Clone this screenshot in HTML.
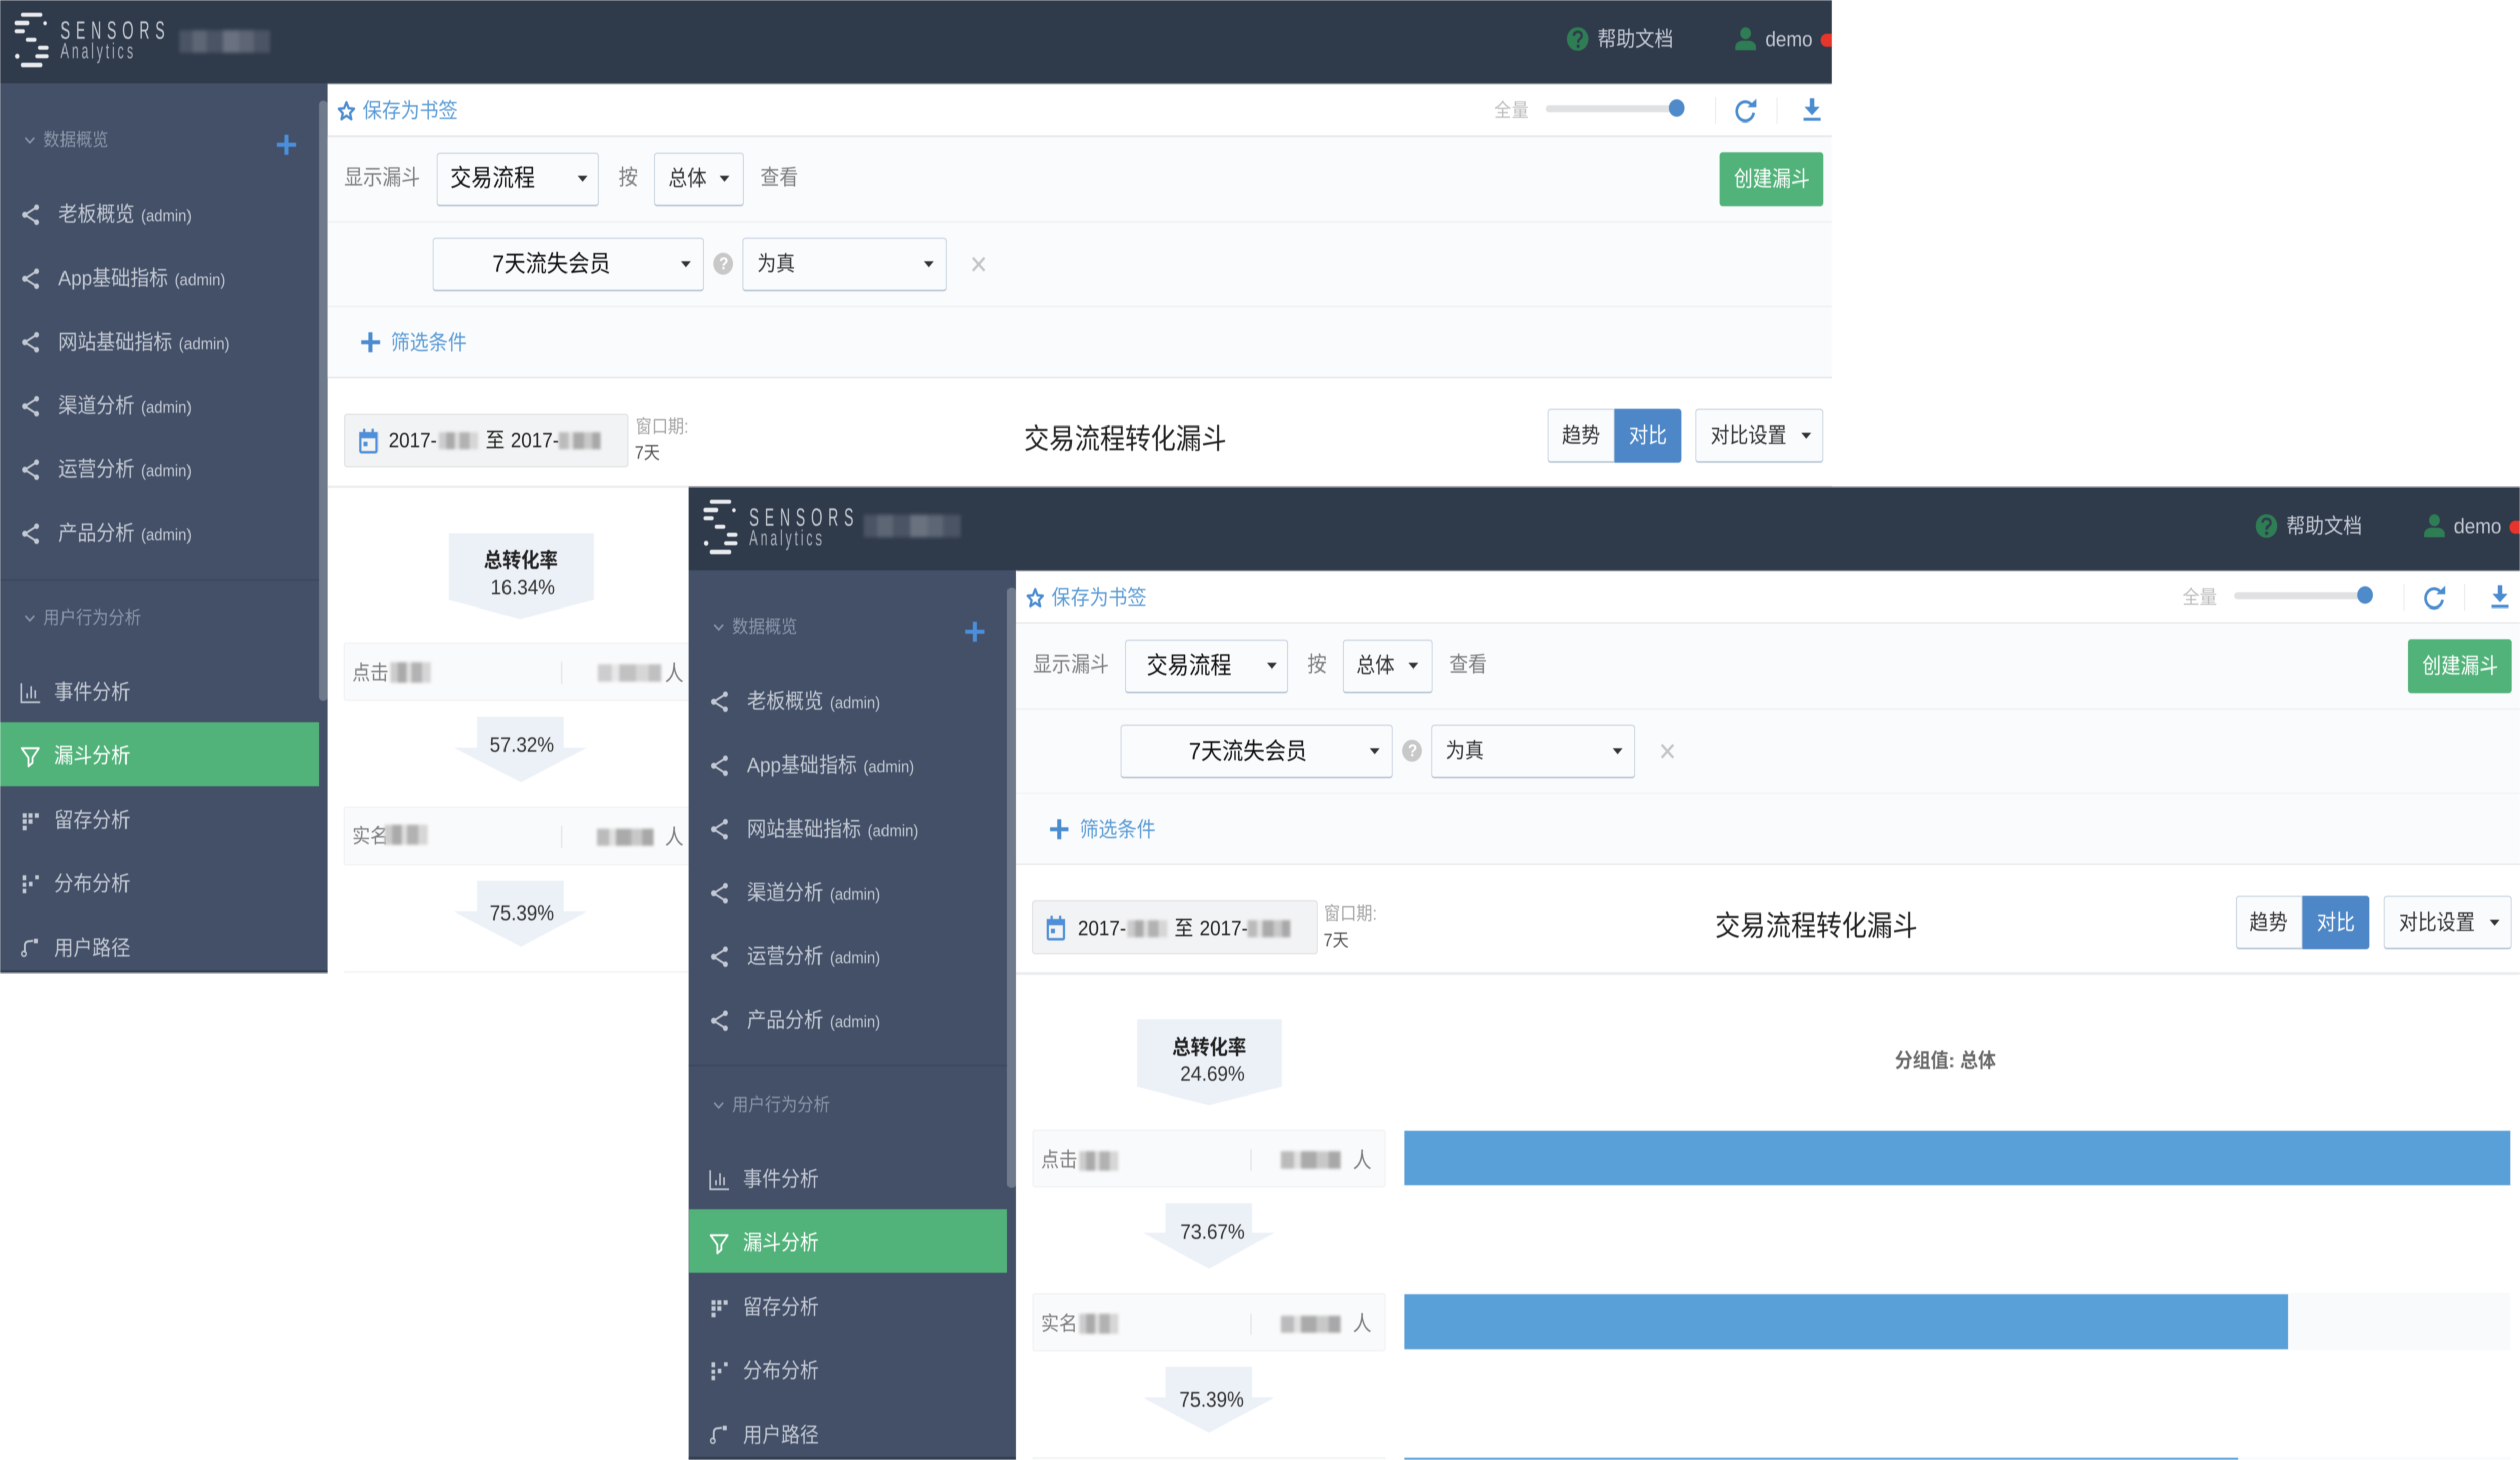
<!DOCTYPE html>
<html lang="zh-CN"><head><meta charset="utf-8"><title>Sensors Analytics</title>
<style>
html,body{margin:0;padding:0;background:#fff;width:100%;height:100%;overflow:hidden}
#p{position:absolute;left:0;top:0;width:5572px;height:2896px;background:#fff;overflow:hidden;font-family:"Liberation Sans","Noto Sans CJK SC",sans-serif;transform-origin:0 0}
@media (max-width:5100px){#p{transform:scaleX(calc(5000 / 5572))}}
.w{position:absolute;overflow:hidden;background:#fff;filter:blur(1px)}
.a{position:absolute;box-sizing:border-box}
.s{position:absolute;white-space:nowrap;line-height:0;font-size:42px}
.s small{font-size:33px;margin-left:3px}
svg{position:absolute;overflow:visible}
.m{color:#c3c9d3}.h{color:#8b96a8;font-size:36px}
.g{color:#7d7d7d}.bl{color:#5b9bd5}
.sel{position:absolute;box-sizing:border-box;background:#f9fbfd;border:2px solid #c3cfdc;border-bottom:3px solid #b3c1d1;border-radius:7px}
.c{position:absolute;width:0;height:0;border-left:11px solid transparent;border-right:11px solid transparent;border-top:12px solid #333}
.row{position:absolute;left:760px;width:781px;background:#f9fafb;border:2px solid #eeeff1;border-radius:5px;box-sizing:border-box}
.bx{position:absolute;filter:blur(3px);background:linear-gradient(90deg,#ccc 0 18%,#aaa 18% 40%,#ddd 40% 52%,#b2b2b2 52% 78%,#d6d6d6 78% 100%)}
.by{position:absolute;filter:blur(3px);background:linear-gradient(90deg,#bbb 0 22%,#e0e0e0 22% 34%,#aaa 34% 60%,#c8c8c8 60% 80%,#a8a8a8 80% 100%)}
.hb{position:absolute;filter:blur(4px);background:linear-gradient(90deg,#4a5464 0 14%,#5d6674 14% 30%,#4a5464 30% 48%,#6a7280 48% 66%,#5d6674 66% 82%,#4a5464 82% 100%)}
.f{fill:#ecf1f7}
.tx{color:#333}
</style></head><body>
<svg width="0" height="0" style="position:absolute"><defs>
<symbol id="share" viewBox="0 0 40 42" overflow="visible"><path d="M33 6 7 21 33 36" fill="none" stroke="#c3c9d3" stroke-width="4"/><circle cx="33" cy="6" r="5.5" fill="#c3c9d3"/><circle cx="7" cy="21" r="6" fill="#c3c9d3"/><circle cx="33" cy="36" r="5.5" fill="#c3c9d3"/></symbol>
<symbol id="logo" viewBox="0 0 120 140" overflow="visible"><g fill="#e9ebee"><rect x="46" y="25" width="48" height="8" rx="4"/><rect x="32" y="41" width="33" height="9" rx="4"/><circle cx="100" cy="46" r="4"/><rect x="32" y="58" width="23" height="8" rx="4"/><rect x="57" y="75" width="24" height="8" rx="4"/><rect x="84" y="91" width="24" height="8" rx="4"/><rect x="78" y="108" width="30" height="8" rx="4"/><circle cx="38" cy="112" r="5"/><rect x="46" y="124" width="48" height="9" rx="4"/></g></symbol>
<symbol id="star" viewBox="0 0 40 40" overflow="visible"><path d="M20 3 25 15 37 16 28 25 31 37 20 30 9 37 12 25 3 16 15 15Z" fill="none" stroke="#4a8ccf" stroke-width="5" stroke-linejoin="round"/></symbol>
<symbol id="cal" viewBox="0 0 42 48" overflow="visible"><path d="M3 9H39V44Q39 47 36 47H6Q3 47 3 44Z" fill="none" stroke="#4f8fd8" stroke-width="5"/><rect x="1" y="7" width="40" height="12" fill="#4f8fd8"/><rect x="9" y="0" width="5" height="9" fill="#4f8fd8"/><rect x="28" y="0" width="5" height="9" fill="#4f8fd8"/><rect x="10" y="26" width="9" height="9" fill="#4f8fd8"/></symbol>
<symbol id="refresh" viewBox="0 0 50 44" overflow="visible"><path d="M40 11A19 19 0 1 0 44 26" fill="none" stroke="#4a8ccf" stroke-width="6"/><path d="M30 15H50V-2Z" fill="#4a8ccf"/></symbol>
<symbol id="dl" viewBox="0 0 38 46" overflow="visible"><path d="M14 0H24V17H36L19 34 2 17H14ZM0 39H38V45H0Z" fill="#4a8ccf"/></symbol>
<symbol id="q" viewBox="0 0 47 47" overflow="visible"><circle cx="23.500" cy="23.500" r="23.500" fill="#2e7d54"/><path d="M15 17Q16 9 24 9 32 10 32 17 32 21 27 24 24 26 24 31" fill="none" stroke="#2f3a4b" stroke-width="5"/><circle cx="24" cy="38" r="3.500" fill="#2f3a4b"/></symbol>
<symbol id="user" viewBox="0 0 46 46" overflow="visible"><circle cx="23" cy="12" r="12" fill="#2e7d54"/><path d="M0 46V38Q2 29 14 27H32Q44 29 46 38V46Z" fill="#2e7d54"/></symbol>
<symbol id="bars" viewBox="0 0 44 40" overflow="visible"><path d="M2 0V38H44M15 20V30M24 6V30M33 14V30" fill="none" stroke="#c3c9d3" stroke-width="3.500"/></symbol>
<symbol id="fun" viewBox="0 0 44 42" overflow="visible"><path d="M3 3H41L27 22V32L18 39V22Z" fill="none" stroke="#fff" stroke-width="4" stroke-linejoin="round"/></symbol>
<symbol id="ret" viewBox="0 0 36 34" overflow="visible"><g fill="#c3c9d3"><rect width="9" height="9"/><rect x="13" width="9" height="9"/><rect x="27" width="9" height="9"/><rect y="12" width="9" height="9"/><rect x="13" y="12" width="9" height="9"/><rect y="25" width="9" height="9"/></g></symbol>
<symbol id="dis" viewBox="0 0 36 36" overflow="visible"><g fill="#c3c9d3"><rect width="8" height="10"/><rect x="28" width="8" height="8"/><rect y="15" width="8" height="8"/><rect x="14" y="13" width="8" height="9"/><rect y="27" width="8" height="9"/></g></symbol>
<symbol id="path" viewBox="0 0 40 36" overflow="visible"><path d="M8 28V14Q8 5 18 5 20 5 26 4" fill="none" stroke="#c3c9d3" stroke-width="4"/><circle cx="6" cy="30" r="5" fill="none" stroke="#c3c9d3" stroke-width="3"/><rect x="28" y="0" width="9" height="9" fill="#c3c9d3"/></symbol>
</defs></svg>
<div id="p">

<!-- BACK WINDOW -->
<div class="w" style="left:0;top:0;width:4050px;height:1930px">
<div class="a" style="left:0;top:0;width:4050px;height:165px;background:#2f3a4b"></div>
<div class="a" style="left:724px;top:165px;width:3326px;height:2px;background:#8c939e"></div>
<svg style="left:0;top:0" width="120" height="140"><use href="#logo" width="120" height="140"/></svg>
<svg style="left:130px;top:30px" width="250" height="110"><g transform="translate(4 0) scale(.62 1)"><text x="0" y="47" font-size="50" fill="#c6cbd2" textLength="371" lengthAdjust="spacing" font-family="Liberation Sans">SENSORS</text><text x="0" y="86" font-size="44" fill="#a9b0ba" textLength="258" lengthAdjust="spacing" font-family="Liberation Sans">Analytics</text></g></svg>
<div class="hb" style="left:397px;top:60px;width:200px;height:45px"></div>
<svg style="left:3465px;top:54px" width="47" height="47"><use href="#q" width="47" height="47"/></svg>
<span class="s m" style="left:3532px;top:78px">帮助文档</span>
<svg style="left:3837px;top:54px" width="46" height="46"><use href="#user" width="46" height="46"/></svg>
<span class="s m" style="left:3903px;top:78px">demo</span>
<div class="a" style="left:4026px;top:67px;width:24px;height:26px;border-radius:13px 0 0 13px;background:#e8352b"></div>

<div class="a" style="left:0;top:165px;width:724px;height:1765px;background:#435068"></div>
<div class="a" style="left:705px;top:200px;width:19px;height:1190px;background:#6f7a8d;border-radius:8px 8px 8px 8px"></div>
<svg style="left:53px;top:270px" width="26" height="16"><path d="M3 3 13 13 23 3" fill="none" stroke="#8b96a8" stroke-width="3.500"/></svg>
<span class="s h" style="left:96px;top:277px">数据概览</span>
<div class="a" style="left:612px;top:283px;width:43px;height:8px;background:#4a8fdc"></div><div class="a" style="left:629px;top:267px;width:9px;height:40px;background:#4a8fdc"></div>
<svg style="left:48px;top:405px" width="40" height="42"><use href="#share" width="40" height="42"/></svg><span class="s m" style="left:129px;top:425px">老板概览 <small>(admin)</small></span>
<svg style="left:48px;top:532px" width="40" height="42"><use href="#share" width="40" height="42"/></svg><span class="s m" style="left:129px;top:552px">App基础指标 <small>(admin)</small></span>
<svg style="left:48px;top:658px" width="40" height="42"><use href="#share" width="40" height="42"/></svg><span class="s m" style="left:129px;top:679px">网站基础指标 <small>(admin)</small></span>
<svg style="left:48px;top:785px" width="40" height="42"><use href="#share" width="40" height="42"/></svg><span class="s m" style="left:129px;top:805px">渠道分析 <small>(admin)</small></span>
<svg style="left:48px;top:911px" width="40" height="42"><use href="#share" width="40" height="42"/></svg><span class="s m" style="left:129px;top:931px">运营分析 <small>(admin)</small></span>
<svg style="left:48px;top:1038px" width="40" height="42"><use href="#share" width="40" height="42"/></svg><span class="s m" style="left:129px;top:1058px">产品分析 <small>(admin)</small></span>
<div class="a" style="left:0;top:1149px;width:705px;height:3px;background:#3b475d"></div>
<svg style="left:53px;top:1218px" width="26" height="16"><path d="M3 3 13 13 23 3" fill="none" stroke="#8b96a8" stroke-width="3.500"/></svg>
<span class="s h" style="left:96px;top:1225px">用户行为分析</span>
<svg style="left:45px;top:1355px" width="44" height="40"><use href="#bars" width="44" height="40"/></svg><span class="s m" style="left:120px;top:1373px">事件分析</span>
<div class="a" style="left:0;top:1433px;width:705px;height:127px;background:#52b37a"></div>
<svg style="left:45px;top:1481px" width="44" height="42"><use href="#fun" width="44" height="42"/></svg><span class="s" style="left:120px;top:1499px;color:#fff">漏斗分析</span>
<svg style="left:50px;top:1613px" width="36" height="34"><use href="#ret" width="36" height="34"/></svg><span class="s m" style="left:120px;top:1627px">留存分析</span>
<svg style="left:50px;top:1736px" width="36" height="36"><use href="#dis" width="36" height="36"/></svg><span class="s m" style="left:120px;top:1753px">分布分析</span>
<svg style="left:47px;top:1862px" width="40" height="36"><use href="#path" width="40" height="36"/></svg><span class="s m" style="left:120px;top:1881px">用户路径</span>
<div class="a" style="left:0;top:1925px;width:724px;height:5px;background:#333e51"></div>

<!-- main rows -->
<div class="a" style="left:724px;top:268px;width:3326px;height:4px;background:#e8e9ea"></div>
<div class="a" style="left:724px;top:272px;width:3326px;height:168px;background:#f9fbfd"></div>
<div class="a" style="left:724px;top:439px;width:3326px;height:3px;background:#eef0f2"></div>
<div class="a" style="left:724px;top:442px;width:3326px;height:166px;background:#f9fbfd"></div>
<div class="a" style="left:724px;top:606px;width:3326px;height:3px;background:#eef0f2"></div>
<div class="a" style="left:724px;top:609px;width:3326px;height:138px;background:#f9fbfd"></div>
<div class="a" style="left:724px;top:747px;width:3326px;height:3px;background:#e4e6e8"></div>
<div class="a" style="left:724px;top:964px;width:3326px;height:3px;background:#e8e9ea"></div>

<svg style="left:746px;top:200px" width="40" height="40"><use href="#star" width="40" height="40"/></svg>
<span class="s bl" style="left:802px;top:220px">保存为书签</span>
<span class="s" style="left:3304px;top:220px;font-size:38px;color:#bcbcbc">全量</span>
<div class="a" style="left:3418px;top:209px;width:290px;height:14px;background:#e0e1e2;border-radius:7px"></div>
<div class="a" style="left:3690px;top:197px;width:35px;height:35px;border-radius:50%;background:#4f8acb"></div>
<div class="a" style="left:3792px;top:193px;width:2px;height:52px;background:#e8e8e8"></div>
<svg style="left:3834px;top:198px" width="50" height="44"><use href="#refresh" width="50" height="44"/></svg>
<div class="a" style="left:3928px;top:193px;width:2px;height:52px;background:#e8e8e8"></div>
<svg style="left:3988px;top:195px" width="38" height="46"><use href="#dl" width="38" height="46"/></svg>

<span class="s g" style="left:761px;top:352px">显示漏斗</span>
<div class="sel" style="left:966px;top:303px;width:358px;height:106px"></div>
<span class="s" style="left:995px;top:353px;font-size:47px;color:#111">交易流程</span><div class="c" style="left:1277px;top:349px"></div>
<span class="s g" style="left:1368px;top:352px">按</span>
<div class="sel" style="left:1446px;top:303px;width:199px;height:106px"></div>
<span class="s tx" style="left:1478px;top:354px">总体</span><div class="c" style="left:1591px;top:349px"></div>
<span class="s g" style="left:1681px;top:352px">查看</span>
<div class="a" style="left:3802px;top:302px;width:230px;height:107px;background:#52b37a;border-radius:7px"></div>
<span class="s" style="left:3834px;top:355px;color:#fff">创建漏斗</span>

<div class="sel" style="left:957px;top:472px;width:599px;height:106px"></div>
<span class="s" style="left:1089px;top:523px;font-size:47px;color:#111">7天流失会员</span><div class="c" style="left:1506px;top:518px"></div>
<div class="a" style="left:1577px;top:501px;width:44px;height:44px;border-radius:50%;background:#c8c8c8"></div><span class="s" style="left:1590px;top:523px;font-size:34px;color:#fff;font-weight:bold">?</span>
<div class="sel" style="left:1642px;top:472px;width:451px;height:106px"></div>
<span class="s tx" style="left:1674px;top:523px">为真</span><div class="c" style="left:2043px;top:518px"></div>
<svg style="left:2148px;top:508px" width="32" height="32"><path d="M3 3 29 29M29 3 3 29" stroke="#c4c4c4" stroke-width="5"/></svg>

<div class="a" style="left:799px;top:675px;width:41px;height:8px;background:#4a8ccf"></div><div class="a" style="left:815px;top:659px;width:9px;height:40px;background:#4a8ccf"></div>
<span class="s bl" style="left:864px;top:680px">筛选条件</span>

<div class="a" style="left:761px;top:821px;width:629px;height:106px;background:#f2f3f4;border:2px solid #dcdddf;border-radius:7px"></div>
<svg style="left:794px;top:850px" width="42" height="48"><use href="#cal" width="42" height="48"/></svg>
<span class="s" style="left:859px;top:873px;color:#222">2017-</span><div class="bx" style="left:971px;top:857px;width:86px;height:34px"></div>
<span class="s" style="left:1074px;top:873px;color:#222">至</span><span class="s" style="left:1129px;top:873px;color:#222">2017-</span><div class="by" style="left:1236px;top:857px;width:92px;height:34px"></div>
<span class="s" style="left:1405px;top:846px;font-size:36px;color:#a3a3a3">窗口期:</span>
<span class="s" style="left:1403px;top:898px;font-size:36px;color:#555">7天</span>
<span class="s" style="left:2264px;top:871px;font-size:56px;color:#222">交易流程转化漏斗</span>

<div class="a" style="left:3422px;top:811px;width:148px;height:107px;background:#f9fbfd;border:2px solid #c3cfdc;border-bottom:3px solid #b3c1d1;border-radius:7px 0 0 7px"></div>
<div class="a" style="left:3570px;top:811px;width:148px;height:107px;background:#4d87c7;border-radius:0 7px 7px 0"></div>
<span class="s tx" style="left:3454px;top:864px">趋势</span><span class="s" style="left:3602px;top:864px;color:#fff">对比</span>
<div class="sel" style="left:3749px;top:811px;width:283px;height:107px"></div>
<span class="s tx" style="left:3782px;top:864px">对比设置</span><div class="c" style="left:3983px;top:858px"></div>

<svg style="left:0;top:0" width="1600" height="1930"><path class="f" d="M992 1058H1313V1190L1150 1228 992 1190Z"/><path class="f" d="M1055 1422H1247V1483H1298L1152 1552 1003 1483H1055Z"/><path class="f" d="M1055 1747H1247V1808H1298L1152 1878 1003 1808H1055Z"/></svg>
<span class="s" style="left:1070px;top:1111px;font-size:41px;color:#222;font-weight:bold">总转化率</span>
<span class="s tx" style="left:1085px;top:1165px">16.34%</span>
<span class="s tx" style="left:1083px;top:1477px">57.32%</span>
<span class="s tx" style="left:1083px;top:1811px">75.39%</span>
<div class="row" style="top:1275px;height:115px"></div>
<div class="row" style="top:1600px;height:116px"></div>
<div class="row" style="top:1927px;height:3px;border-bottom:0"></div>
<span class="s g" style="left:779px;top:1335px;font-size:40px">点击</span><div class="bx" style="left:863px;top:1314px;width:90px;height:40px"></div>
<div class="a" style="left:1241px;top:1313px;width:3px;height:44px;background:#e4e5e7"></div><div class="by" style="left:1322px;top:1318px;width:140px;height:34px;opacity:.7"></div><span class="s g" style="left:1470px;top:1336px;font-size:42px">人</span>
<span class="s g" style="left:779px;top:1659px;font-size:40px">实名</span><div class="bx" style="left:850px;top:1636px;width:96px;height:40px"></div>
<div class="a" style="left:1241px;top:1638px;width:3px;height:44px;background:#e4e5e7"></div><div class="by" style="left:1320px;top:1644px;width:125px;height:34px"></div><span class="s g" style="left:1470px;top:1661px;font-size:42px">人</span>
</div>

<!-- FRONT WINDOW -->
<div class="w" style="left:1523px;top:966px;width:4049px;height:1930px">
<div class="a" style="left:0;top:0;width:4049px;height:165px;background:#2f3a4b"></div>
<div class="a" style="left:724px;top:165px;width:3325px;height:2px;background:#8c939e"></div>
<svg style="left:0;top:0" width="120" height="140"><use href="#logo" width="120" height="140"/></svg>
<svg style="left:130px;top:30px" width="250" height="110"><g transform="translate(4 0) scale(.62 1)"><text x="0" y="47" font-size="50" fill="#c6cbd2" textLength="371" lengthAdjust="spacing" font-family="Liberation Sans">SENSORS</text><text x="0" y="86" font-size="44" fill="#a9b0ba" textLength="258" lengthAdjust="spacing" font-family="Liberation Sans">Analytics</text></g></svg>
<div class="hb" style="left:387px;top:55px;width:214px;height:45px"></div>
<svg style="left:3465px;top:54px" width="47" height="47"><use href="#q" width="47" height="47"/></svg>
<span class="s m" style="left:3532px;top:78px">帮助文档</span>
<svg style="left:3837px;top:54px" width="46" height="46"><use href="#user" width="46" height="46"/></svg>
<span class="s m" style="left:3903px;top:78px">demo</span>
<div class="a" style="left:4026px;top:67px;width:23px;height:26px;border-radius:13px 0 0 13px;background:#e8352b"></div>

<div class="a" style="left:0;top:165px;width:723px;height:1765px;background:#435068"></div>
<div class="a" style="left:704px;top:200px;width:19px;height:1190px;background:#6f7a8d;border-radius:8px"></div>
<svg style="left:53px;top:270px" width="26" height="16"><path d="M3 3 13 13 23 3" fill="none" stroke="#8b96a8" stroke-width="3.500"/></svg>
<span class="s h" style="left:96px;top:277px">数据概览</span>
<div class="a" style="left:611px;top:283px;width:43px;height:8px;background:#4a8fdc"></div><div class="a" style="left:628px;top:267px;width:9px;height:40px;background:#4a8fdc"></div>
<svg style="left:48px;top:405px" width="40" height="42"><use href="#share" width="40" height="42"/></svg><span class="s m" style="left:129px;top:425px">老板概览 <small>(admin)</small></span>
<svg style="left:48px;top:532px" width="40" height="42"><use href="#share" width="40" height="42"/></svg><span class="s m" style="left:129px;top:552px">App基础指标 <small>(admin)</small></span>
<svg style="left:48px;top:658px" width="40" height="42"><use href="#share" width="40" height="42"/></svg><span class="s m" style="left:129px;top:679px">网站基础指标 <small>(admin)</small></span>
<svg style="left:48px;top:785px" width="40" height="42"><use href="#share" width="40" height="42"/></svg><span class="s m" style="left:129px;top:805px">渠道分析 <small>(admin)</small></span>
<svg style="left:48px;top:911px" width="40" height="42"><use href="#share" width="40" height="42"/></svg><span class="s m" style="left:129px;top:931px">运营分析 <small>(admin)</small></span>
<svg style="left:48px;top:1038px" width="40" height="42"><use href="#share" width="40" height="42"/></svg><span class="s m" style="left:129px;top:1058px">产品分析 <small>(admin)</small></span>
<div class="a" style="left:0;top:1146px;width:704px;height:3px;background:#3b475d"></div>
<svg style="left:53px;top:1218px" width="26" height="16"><path d="M3 3 13 13 23 3" fill="none" stroke="#8b96a8" stroke-width="3.500"/></svg>
<span class="s h" style="left:96px;top:1225px">用户行为分析</span>
<svg style="left:45px;top:1355px" width="44" height="40"><use href="#bars" width="44" height="40"/></svg><span class="s m" style="left:120px;top:1373px">事件分析</span>
<div class="a" style="left:1px;top:1433px;width:703px;height:126px;background:#52b37a"></div>
<svg style="left:45px;top:1481px" width="44" height="42"><use href="#fun" width="44" height="42"/></svg><span class="s" style="left:120px;top:1499px;color:#fff">漏斗分析</span>
<svg style="left:50px;top:1613px" width="36" height="34"><use href="#ret" width="36" height="34"/></svg><span class="s m" style="left:120px;top:1627px">留存分析</span>
<svg style="left:50px;top:1736px" width="36" height="36"><use href="#dis" width="36" height="36"/></svg><span class="s m" style="left:120px;top:1753px">分布分析</span>
<svg style="left:47px;top:1862px" width="40" height="36"><use href="#path" width="40" height="36"/></svg><span class="s m" style="left:120px;top:1881px">用户路径</span>
<div class="a" style="left:0;top:1924px;width:723px;height:6px;background:#333e51"></div>

<div class="a" style="left:723px;top:268px;width:3326px;height:3px;background:#e8e9ea"></div>
<div class="a" style="left:723px;top:271px;width:3326px;height:168px;background:#f9fbfd"></div>
<div class="a" style="left:723px;top:439px;width:3326px;height:3px;background:#eef0f2"></div>
<div class="a" style="left:723px;top:442px;width:3326px;height:164px;background:#f9fbfd"></div>
<div class="a" style="left:723px;top:606px;width:3326px;height:2px;background:#eef0f2"></div>
<div class="a" style="left:723px;top:608px;width:3326px;height:139px;background:#f9fbfd"></div>
<div class="a" style="left:723px;top:747px;width:3326px;height:2px;background:#e0e2e5"></div>
<div class="a" style="left:723px;top:963px;width:3326px;height:4px;background:#e9eaeb"></div>

<svg style="left:746px;top:200px" width="40" height="40"><use href="#star" width="40" height="40"/></svg>
<span class="s bl" style="left:802px;top:220px">保存为书签</span>
<span class="s" style="left:3303px;top:220px;font-size:38px;color:#bcbcbc">全量</span>
<div class="a" style="left:3417px;top:209px;width:290px;height:14px;background:#e0e1e2;border-radius:7px"></div>
<div class="a" style="left:3689px;top:197px;width:35px;height:35px;border-radius:50%;background:#4f8acb"></div>
<div class="a" style="left:3791px;top:193px;width:2px;height:52px;background:#e8e8e8"></div>
<svg style="left:3834px;top:198px" width="50" height="44"><use href="#refresh" width="50" height="44"/></svg>
<div class="a" style="left:3925px;top:193px;width:2px;height:52px;background:#e8e8e8"></div>
<svg style="left:3986px;top:195px" width="38" height="46"><use href="#dl" width="38" height="46"/></svg>

<span class="s g" style="left:761px;top:352px">显示漏斗</span>
<div class="sel" style="left:965px;top:303px;width:360px;height:106px"></div>
<span class="s" style="left:1012px;top:354px;font-size:47px;color:#111">交易流程</span><div class="c" style="left:1278px;top:349px"></div>
<span class="s g" style="left:1368px;top:352px">按</span>
<div class="sel" style="left:1446px;top:303px;width:199px;height:106px"></div>
<span class="s tx" style="left:1476px;top:354px">总体</span><div class="c" style="left:1591px;top:349px"></div>
<span class="s g" style="left:1681px;top:352px">查看</span>
<div class="a" style="left:3801px;top:302px;width:230px;height:107px;background:#52b37a;border-radius:7px"></div>
<span class="s" style="left:3833px;top:355px;color:#fff">创建漏斗</span>

<div class="sel" style="left:955px;top:472px;width:601px;height:106px"></div>
<span class="s" style="left:1106px;top:524px;font-size:47px;color:#111">7天流失会员</span><div class="c" style="left:1506px;top:518px"></div>
<div class="a" style="left:1577px;top:501px;width:44px;height:44px;border-radius:50%;background:#c8c8c8"></div><span class="s" style="left:1590px;top:523px;font-size:34px;color:#fff;font-weight:bold">?</span>
<div class="sel" style="left:1642px;top:472px;width:451px;height:106px"></div>
<span class="s tx" style="left:1674px;top:523px">为真</span><div class="c" style="left:2043px;top:518px"></div>
<svg style="left:2148px;top:508px" width="32" height="32"><path d="M3 3 29 29M29 3 3 29" stroke="#c4c4c4" stroke-width="5"/></svg>

<div class="a" style="left:799px;top:675px;width:41px;height:8px;background:#4a8ccf"></div><div class="a" style="left:815px;top:659px;width:9px;height:40px;background:#4a8ccf"></div>
<span class="s bl" style="left:864px;top:680px">筛选条件</span>

<div class="a" style="left:759px;top:820px;width:632px;height:107px;background:#f2f3f4;border:2px solid #dcdddf;border-radius:7px"></div>
<svg style="left:791px;top:850px" width="42" height="48"><use href="#cal" width="42" height="48"/></svg>
<span class="s" style="left:860px;top:875px;color:#222">2017-</span><div class="bx" style="left:970px;top:859px;width:88px;height:34px"></div>
<span class="s" style="left:1074px;top:875px;color:#222">至</span><span class="s" style="left:1129px;top:875px;color:#222">2017-</span><div class="by" style="left:1236px;top:859px;width:94px;height:34px"></div>
<span class="s" style="left:1404px;top:846px;font-size:36px;color:#a3a3a3">窗口期:</span>
<span class="s" style="left:1403px;top:899px;font-size:36px;color:#555">7天</span>
<span class="s" style="left:2269px;top:871px;font-size:56px;color:#222">交易流程转化漏斗</span>

<div class="a" style="left:3421px;top:811px;width:147px;height:106px;background:#f9fbfd;border:2px solid #c3cfdc;border-bottom:3px solid #b3c1d1;border-radius:7px 0 0 7px"></div>
<div class="a" style="left:3568px;top:811px;width:148px;height:106px;background:#4d87c7;border-radius:0 7px 7px 0"></div>
<span class="s tx" style="left:3451px;top:864px">趋势</span><span class="s" style="left:3600px;top:864px;color:#fff">对比</span>
<div class="sel" style="left:3748px;top:811px;width:283px;height:106px"></div>
<span class="s tx" style="left:3781px;top:864px">对比设置</span><div class="c" style="left:3982px;top:858px"></div>

<svg style="left:0;top:0" width="1600" height="1930"><path class="f" d="M991 1056H1311V1190L1150 1226 991 1190Z"/><path class="f" d="M1054 1421H1246V1479H1295L1150 1551 1004 1479H1054Z"/><path class="f" d="M1054 1745H1246V1806H1295L1150 1876 1004 1806H1054Z"/></svg>
<span class="s" style="left:1069px;top:1111px;font-size:41px;color:#222;font-weight:bold">总转化率</span>
<span class="s tx" style="left:1087px;top:1164px">24.69%</span>
<span class="s tx" style="left:1087px;top:1477px">73.67%</span>
<span class="s tx" style="left:1085px;top:1810px">75.39%</span>
<div class="row" style="top:1275px;height:114px"></div>
<div class="row" style="top:1599px;height:115px"></div>
<div class="row" style="top:1925px;height:5px;border-bottom:0"></div>
<span class="s g" style="left:779px;top:1335px;font-size:40px">点击</span><div class="bx" style="left:863px;top:1318px;width:87px;height:38px"></div>
<div class="a" style="left:1242px;top:1314px;width:3px;height:42px;background:#e4e5e7"></div><div class="by" style="left:1309px;top:1318px;width:132px;height:34px"></div><span class="s g" style="left:1468px;top:1336px;font-size:42px">人</span>
<span class="s g" style="left:779px;top:1660px;font-size:40px">实名</span><div class="bx" style="left:863px;top:1640px;width:87px;height:40px"></div>
<div class="a" style="left:1242px;top:1640px;width:3px;height:42px;background:#e4e5e7"></div><div class="by" style="left:1309px;top:1644px;width:132px;height:34px"></div><span class="s g" style="left:1468px;top:1660px;font-size:42px">人</span>

<span class="s" style="left:2666px;top:1138px;font-size:40px;color:#6a6a6a;font-weight:bold">分组值: 总体</span>
<div class="a" style="left:1582px;top:1277px;width:2446px;height:108px;background:#5aa0d8"></div>
<div class="a" style="left:1582px;top:1598px;width:2446px;height:114px;background:#f9fafc"></div>
<div class="a" style="left:1582px;top:1601px;width:1954px;height:109px;background:#5aa0d8"></div>
<div class="a" style="left:1582px;top:1925px;width:2446px;height:5px;background:#f9fafc"></div>
<div class="a" style="left:1582px;top:1926px;width:1844px;height:4px;background:#5aa0d8"></div>
</div>

</div></body></html>
